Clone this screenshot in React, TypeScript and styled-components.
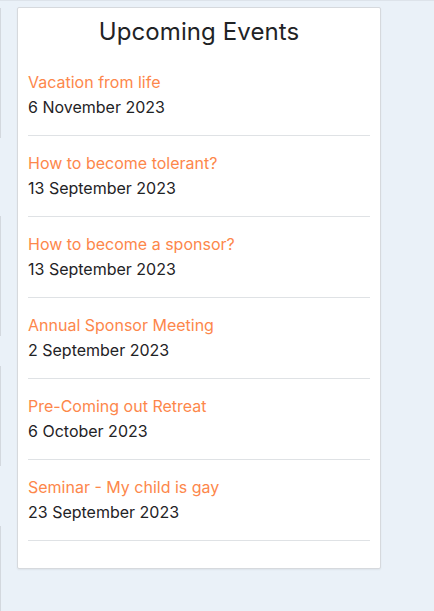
import styled, { createGlobalStyle } from "styled-components";

const GlobalStyle = createGlobalStyle`
	html, body {
		margin: 0;
		padding: 0;
		background: #eaf1f8;
	}
	body {
		font-family: Inter, "Open Sans", sans-serif;
		border-top: 1px solid #dde3ea;
	}
`

const PageLayout = styled.div`
	display: flex;
	align-items: flex-start;
	gap: 16px;
	height: 610px;
	overflow: hidden;
`

const SideColumn = styled.div`
	display: flex;
	flex-direction: column;
	width: 1px;
	padding-top: 7px;
`

const SideCard = styled.div<{ $height: number, $gap: number }>`
	height: ${({ $height }) => $height}px;
	margin-bottom: ${({ $gap }) => $gap}px;
	border-right: 1px solid #d3d8de;
	background: #f5f8fb;
`

const EventsCard = styled.div`
	width: 364px;
	margin-top: 6px;
	padding: 0 10px 27px;
	box-sizing: border-box;
	background: #ffffff;
	border: 1px solid #d6d9dd;
	border-radius: 2px;
	box-shadow: 0 1px 2px rgba(0, 0, 0, 0.06);
`

const Title = styled.h2`
	margin: 0;
	padding: 9px 0 16px;
	text-align: center;
	font-size: 24px;
	font-weight: 400;
	line-height: 30px;
	color: #1f2326;
	letter-spacing: 0.1px;
`

const EventRow = styled.div`
	padding: 7px 0 16px;
	border-bottom: 1px solid #dfe2e5;

	& + & {
		padding-top: 15px;
	}
`

const EventName = styled.a`
	display: block;
	font-size: 16px;
	line-height: 24px;
	color: #fd874b;
	text-decoration: none;
`

const EventDate = styled.div`
	margin-top: 1px;
	font-size: 16px;
	line-height: 24px;
	color: #1f2326;
`

const events = [
	{ name: "Vacation from life", date: "6 November 2023" },
	{ name: "How to become tolerant?", date: "13 September 2023" },
	{ name: "How to become a sponsor?", date: "13 September 2023" },
	{ name: "Annual Sponsor Meeting", date: "2 September 2023" },
	{ name: "Pre-Coming out Retreat", date: "6 October 2023" },
	{ name: "Seminar - My child is gay", date: "23 September 2023" },
]

const sideCards = [
	{ height: 130, gap: 78 },
	{ height: 120, gap: 30 },
	{ height: 100, gap: 60 },
	{ height: 200, gap: 0 },
]

export default function App()
{
	return (
		<>
			<GlobalStyle />
			<PageLayout>
				<SideColumn>
					{sideCards.map((c, i) => (
						<SideCard key={i} $height={c.height} $gap={c.gap} />
					))}
				</SideColumn>
				<EventsCard>
					<Title>Upcoming Events</Title>
					{events.map((e) => (
						<EventRow key={e.name}>
							<EventName href="#">{e.name}</EventName>
							<EventDate>{e.date}</EventDate>
						</EventRow>
					))}
				</EventsCard>
			</PageLayout>
		</>
	)
}
